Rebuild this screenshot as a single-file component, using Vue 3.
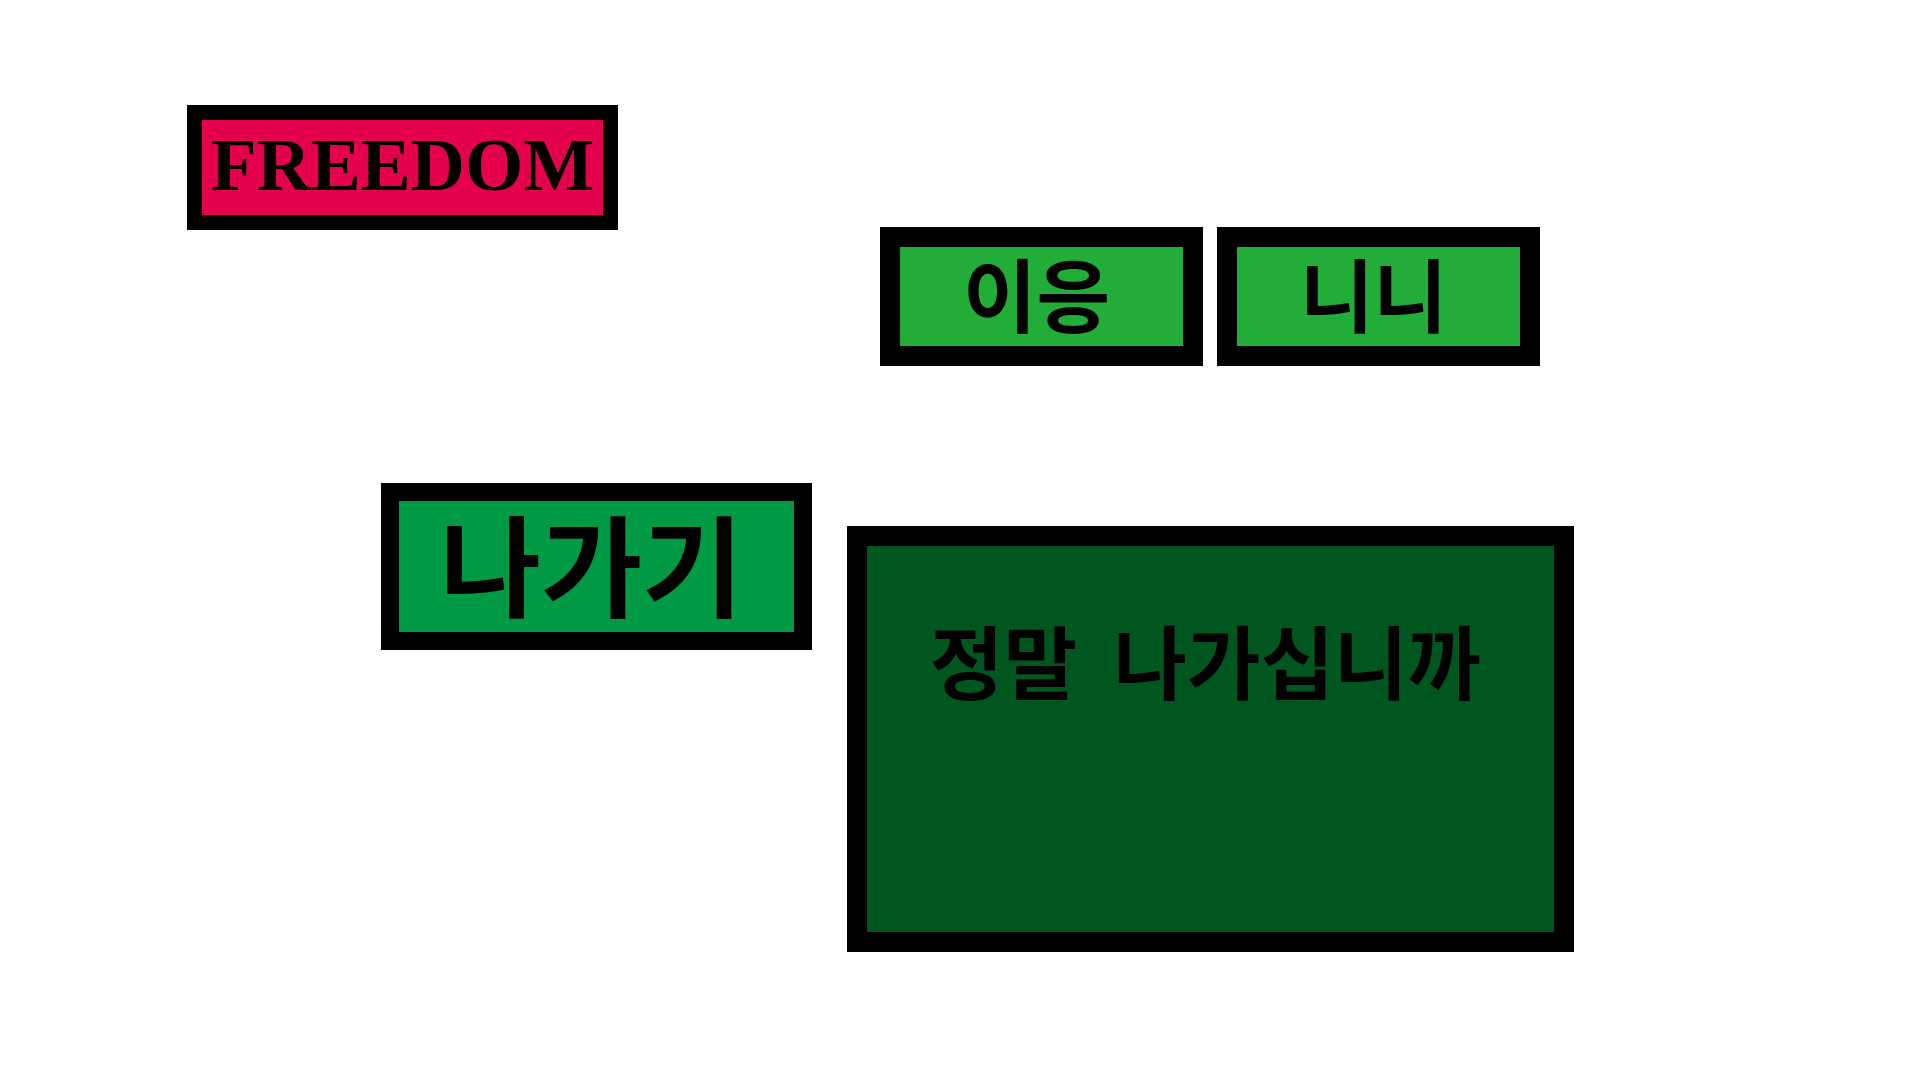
<script setup>
const choices = ['이응', '니니']
</script>

<template>
  <main class="page">
    <div class="menu">
      <button type="button" class="box title">FREEDOM</button>
      <button type="button" class="box exit">나가기</button>
    </div>
    <div class="confirm">
      <div class="choices">
        <button v-for="choice in choices" :key="choice" type="button" class="box choice">
          {{ choice }}
        </button>
      </div>
      <section class="box panel">
        <p class="question"><span>정말</span> <span class="verb">나가십니까</span></p>
      </section>
    </div>
  </main>
</template>

<style>
body {
  margin: 0;
  background: #fff;
}
</style>

<style scoped>
.page {
  display: grid;
  grid-template-columns: 187fr 625fr 35fr 727fr 346fr;
  align-items: start;
  padding: 105px 0 128px;
}

.menu {
  grid-column: 2;
  display: flex;
  flex-direction: column;
  gap: 253px;
}

.confirm {
  grid-column: 4;
  display: flex;
  flex-direction: column;
  gap: 160px;
  padding-top: 122px;
}

.box {
  box-sizing: border-box;
  margin: 0;
  padding: 0 10px 10px 0;
  border: 20px solid #000;
  border-radius: 0;
  color: #000;
  font-family: "Noto Sans CJK KR", sans-serif;
  font-size: 80px;
  font-weight: 700;
  line-height: 89px;
  white-space: nowrap;
}

.title {
  width: 431px;
  padding: 0 0 6px;
  border-width: 15px;
  background: #e5004f;
  font-family: "Liberation Serif", serif;
  font-size: 75px;
  line-height: 89px;
}

.exit {
  align-self: flex-end;
  width: 431px;
  border-width: 18px;
  background: #009944;
  font-size: 110px;
  line-height: 121px;
}

.choices {
  display: flex;
  gap: 14px;
  padding: 0 34px 0 33px;
}

.choice {
  flex: 1;
  background: #22ac38;
}

.panel {
  min-height: 426px;
  padding-top: 68px;
  background: #00561f;
}

.question {
  margin: 0;
  text-align: center;
}

.verb {
  margin-left: 18px;
}
</style>
